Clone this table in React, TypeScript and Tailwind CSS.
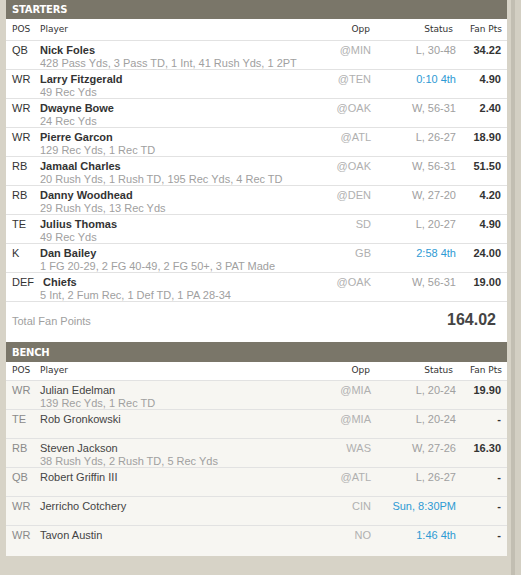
import React from 'react';

type Row = {
  pos: string;
  name: string;
  stats?: string;
  opp: string;
  status: string;
  live?: boolean;
  pts: string;
};

const starters: Row[] = [
  { pos: 'QB', name: 'Nick Foles', stats: '428 Pass Yds, 3 Pass TD, 1 Int, 41 Rush Yds, 1 2PT', opp: '@MIN', status: 'L, 30-48', pts: '34.22' },
  { pos: 'WR', name: 'Larry Fitzgerald', stats: '49 Rec Yds', opp: '@TEN', status: '0:10 4th', live: true, pts: '4.90' },
  { pos: 'WR', name: 'Dwayne Bowe', stats: '24 Rec Yds', opp: '@OAK', status: 'W, 56-31', pts: '2.40' },
  { pos: 'WR', name: 'Pierre Garcon', stats: '129 Rec Yds, 1 Rec TD', opp: '@ATL', status: 'L, 26-27', pts: '18.90' },
  { pos: 'RB', name: 'Jamaal Charles', stats: '20 Rush Yds, 1 Rush TD, 195 Rec Yds, 4 Rec TD', opp: '@OAK', status: 'W, 56-31', pts: '51.50' },
  { pos: 'RB', name: 'Danny Woodhead', stats: '29 Rush Yds, 13 Rec Yds', opp: '@DEN', status: 'W, 27-20', pts: '4.20' },
  { pos: 'TE', name: 'Julius Thomas', stats: '49 Rec Yds', opp: 'SD', status: 'L, 20-27', pts: '4.90' },
  { pos: 'K', name: 'Dan Bailey', stats: '1 FG 20-29, 2 FG 40-49, 2 FG 50+, 3 PAT Made', opp: 'GB', status: '2:58 4th', live: true, pts: '24.00' },
  { pos: 'DEF', name: '\u00a0Chiefs', stats: '5 Int, 2 Fum Rec, 1 Def TD, 1 PA 28-34', opp: '@OAK', status: 'W, 56-31', pts: '19.00' },
];

const bench: Row[] = [
  { pos: 'WR', name: 'Julian Edelman', stats: '139 Rec Yds, 1 Rec TD', opp: '@MIA', status: 'L, 20-24', pts: '19.90' },
  { pos: 'TE', name: 'Rob Gronkowski', opp: '@MIA', status: 'L, 20-24', pts: '-' },
  { pos: 'RB', name: 'Steven Jackson', stats: '38 Rush Yds, 2 Rush TD, 5 Rec Yds', opp: 'WAS', status: 'W, 27-26', pts: '16.30' },
  { pos: 'QB', name: 'Robert Griffin III', opp: '@ATL', status: 'L, 26-27', pts: '-' },
  { pos: 'WR', name: 'Jerricho Cotchery', opp: 'CIN', status: 'Sun, 8:30PM', live: true, pts: '-' },
  { pos: 'WR', name: 'Tavon Austin', opp: 'NO', status: '1:46 4th', live: true, pts: '-' },
];

const arial = "font-['Liberation_Sans',Arial,sans-serif]";
const verdana = "font-['DejaVu_Sans',Verdana,sans-serif]";

function SectionHeader({ title, tall }: { title: string; tall?: boolean }) {
  return (
    <div
      className={`${tall ? 'h-[20px]' : 'h-[19px]'} bg-[#7a7669] px-[6px] flex items-center text-[10px] font-bold tracking-[-0.2px] text-white ${verdana}`}
    >
      {title}
    </div>
  );
}

function ColumnHeader({ bench }: { bench?: boolean }) {
  return (
    <div
      className={`${bench ? 'h-[19px]' : 'h-[22px]'} flex items-center border-b border-[#e2e2e2] pl-[6px] pr-[5px] text-[9px] text-[#333] ${verdana}`}
    >
      <div className="w-[28px]">POS</div>
      <div className="flex-1">Player</div>
      <div className="w-[60px] text-right">Opp</div>
      <div className="w-[83px] text-right">Status</div>
      <div className="w-[49px] text-right">Fan Pts</div>
    </div>
  );
}

function PlayerRow({ row, isBench, last }: { row: Row; isBench?: boolean; last?: boolean }) {
  return (
    <div
      className={`${last ? 'h-[30px]' : 'h-[29px] border-b border-[#e2e2e2]'} pt-[3px] flex pl-[6px] pr-[6px] text-[11px] leading-[13px] ${arial} ${
        isBench ? 'bg-[#f7f6f2]' : 'bg-white'
      }`}
    >
      <div className={`w-[28px] ${isBench ? 'text-[#8a8a8a]' : 'text-[#333]'}`}>{row.pos}</div>
      <div className="flex-1 min-w-0">
        <div className={isBench ? 'text-[#444]' : 'font-bold text-[#333]'}>{row.name}</div>
        {row.stats && <div className="text-[#a0a0a0] whitespace-nowrap leading-[12px]">{row.stats}</div>}
      </div>
      <div className="w-[60px] text-right text-[#b0b0b0]">{row.opp}</div>
      <div className={`w-[85px] text-right ${row.live ? 'text-[#2e9ad4]' : 'text-[#a0a0a0]'}`}>{row.status}</div>
      <div className="w-[45px] text-right font-bold text-[#333]">{row.pts}</div>
    </div>
  );
}

export default function App() {
  return (
    <div className="w-[521px] h-[575px] bg-[#d7d3c7] flex overflow-hidden">
      <div className="w-[6px] shrink-0" />
      <div className="w-[501px] shrink-0 self-start bg-white">
        {/* Starters */}
        <SectionHeader title="STARTERS" />
        <ColumnHeader />
        {starters.map((row, i) => (
          <PlayerRow key={i} row={row} />
        ))}
        <div className={`h-[40px] flex items-center justify-between pl-[6px] pr-[11px] pb-[4px] ${arial}`}>
          <span className="text-[11px] text-[#a0a0a0] mt-[2px]">Total Fan Points</span>
          <span className="text-[16px] font-bold text-[#444]">164.02</span>
        </div>

        {/* Bench */}
        <SectionHeader title="BENCH" tall />
        <ColumnHeader bench />
        {bench.map((row, i) => (
          <PlayerRow key={i} row={row} isBench last={i === bench.length - 1} />
        ))}
      </div>
      <div className="w-[4px] shrink-0" />
      <div className="w-[4px] shrink-0 bg-[#c2beb2]" />
      <div className="flex-1 bg-[#d3cfc3]" />
    </div>
  );
}
